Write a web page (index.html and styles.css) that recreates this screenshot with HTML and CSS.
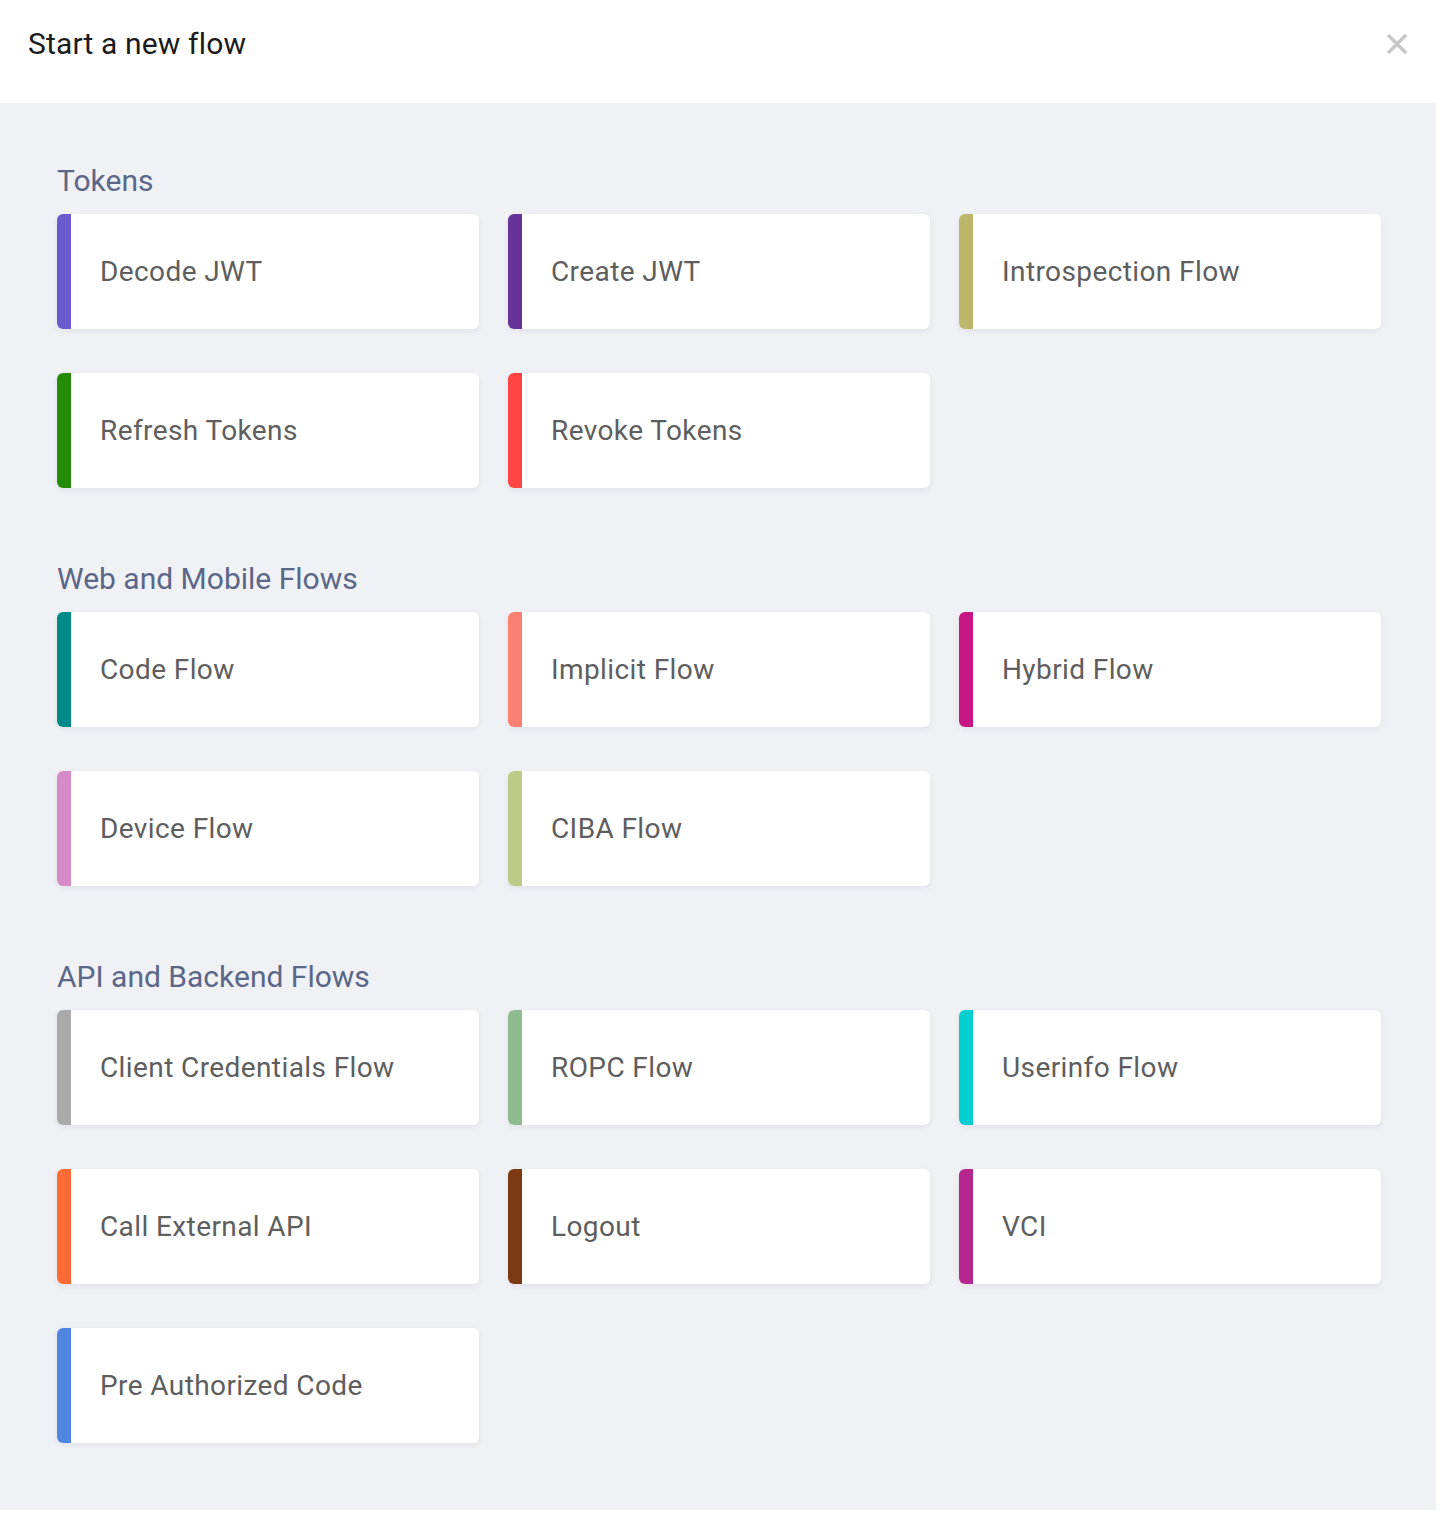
FILE: index.html
```html
<!DOCTYPE html>
<html lang="en">
<head>
<meta charset="utf-8">
<title>Start a new flow</title>
<link rel="stylesheet" href="styles.css">
</head>
<body>
<header class="modal-header">
  <h1 class="modal-title">Start a new flow</h1>
  <button class="close-btn" aria-label="Close">
    <svg width="22" height="22" viewBox="0 0 22 22"><path d="M2 2 L20 20 M20 2 L2 20" stroke="#c6c6c6" stroke-width="3.2" stroke-linecap="butt" fill="none"/></svg>
  </button>
</header>
<main class="modal-body">
  <section class="group">
    <h2 class="group-title">Tokens</h2>
    <div class="grid">
      <div class="card c-slate"><span class="bar"></span><span class="label">Decode JWT</span></div>
      <div class="card c-rebecca"><span class="bar"></span><span class="label">Create JWT</span></div>
      <div class="card c-khaki"><span class="bar"></span><span class="label">Introspection Flow</span></div>
      <div class="card c-green"><span class="bar"></span><span class="label">Refresh Tokens</span></div>
      <div class="card c-red"><span class="bar"></span><span class="label">Revoke Tokens</span></div>
    </div>
  </section>
  <section class="group">
    <h2 class="group-title">Web and Mobile Flows</h2>
    <div class="grid">
      <div class="card c-cyan"><span class="bar"></span><span class="label">Code Flow</span></div>
      <div class="card c-salmon"><span class="bar"></span><span class="label">Implicit Flow</span></div>
      <div class="card c-violetred"><span class="bar"></span><span class="label">Hybrid Flow</span></div>
      <div class="card c-orchid"><span class="bar"></span><span class="label">Device Flow</span></div>
      <div class="card c-olive"><span class="bar"></span><span class="label">CIBA Flow</span></div>
    </div>
  </section>
  <section class="group">
    <h2 class="group-title">API and Backend Flows</h2>
    <div class="grid">
      <div class="card c-gray"><span class="bar"></span><span class="label">Client Credentials Flow</span></div>
      <div class="card c-seagreen"><span class="bar"></span><span class="label">ROPC Flow</span></div>
      <div class="card c-turquoise"><span class="bar"></span><span class="label">Userinfo Flow</span></div>
      <div class="card c-orange"><span class="bar"></span><span class="label">Call External API</span></div>
      <div class="card c-brown"><span class="bar"></span><span class="label">Logout</span></div>
      <div class="card c-magenta"><span class="bar"></span><span class="label">VCI</span></div>
      <div class="card c-blue"><span class="bar"></span><span class="label">Pre Authorized Code</span></div>
    </div>
  </section>
</main>
</body>
</html>
```
FILE: styles.css
```css
* { box-sizing: border-box; }
html, body { margin: 0; padding: 0; background: #ffffff; }
body { font-family: Roboto, "Liberation Sans", Arial, sans-serif; }

.modal-header {
  height: 103px;
  display: flex;
  align-items: center;
  justify-content: space-between;
  padding: 0 41px 16px 28px;
}
.modal-title {
  margin: 0;
  font-size: 30px;
  font-weight: 400;
  color: #1b1b1b;
  line-height: 36px;
  letter-spacing: 0.15px;
}
.close-btn {
  border: 0;
  background: none;
  padding: 0;
  width: 22px;
  height: 22px;
  display: flex;
  cursor: pointer;
}

.modal-body {
  width: 1436px;
  background: #f0f1f5;
  padding: 60px 54px 67px 57px;
  display: flex;
  flex-direction: column;
  gap: 73px;
}
.group-title {
  margin: 0 0 15px 0;
  font-size: 30px;
  font-weight: 400;
  line-height: 36px;
  color: #5b6788;
}
.grid {
  display: grid;
  grid-template-columns: repeat(3, 422px);
  column-gap: 29px;
  row-gap: 44px;
}
.card {
  height: 115px;
  background: #ffffff;
  border-radius: 6px;
  box-shadow: 0 2px 6px rgba(20, 30, 60, 0.07);
  display: flex;
  align-items: center;
  overflow: hidden;
}
.bar {
  align-self: stretch;
  width: 14px;
  flex: none;
  background: var(--accent);
}
.label {
  margin-left: 29px;
  font-size: 28px;
  color: #5e5e5e;
  line-height: 34px;
  letter-spacing: 0.4px;
}

.c-slate { --accent: #6a5acd; }
.c-rebecca { --accent: #663399; }
.c-khaki { --accent: #bdb76b; }
.c-green { --accent: #248c06; }
.c-red { --accent: #ff4444; }
.c-cyan { --accent: #008b8b; }
.c-salmon { --accent: #fa8072; }
.c-violetred { --accent: #c71585; }
.c-orchid { --accent: #d68ac8; }
.c-olive { --accent: #bccb88; }
.c-gray { --accent: #a9a9a9; }
.c-seagreen { --accent: #8fbc8f; }
.c-turquoise { --accent: #00ced1; }
.c-orange { --accent: #ff6b35; }
.c-brown { --accent: #7b3a14; }
.c-magenta { --accent: #b5278f; }
.c-blue { --accent: #4f86e0; }
```
